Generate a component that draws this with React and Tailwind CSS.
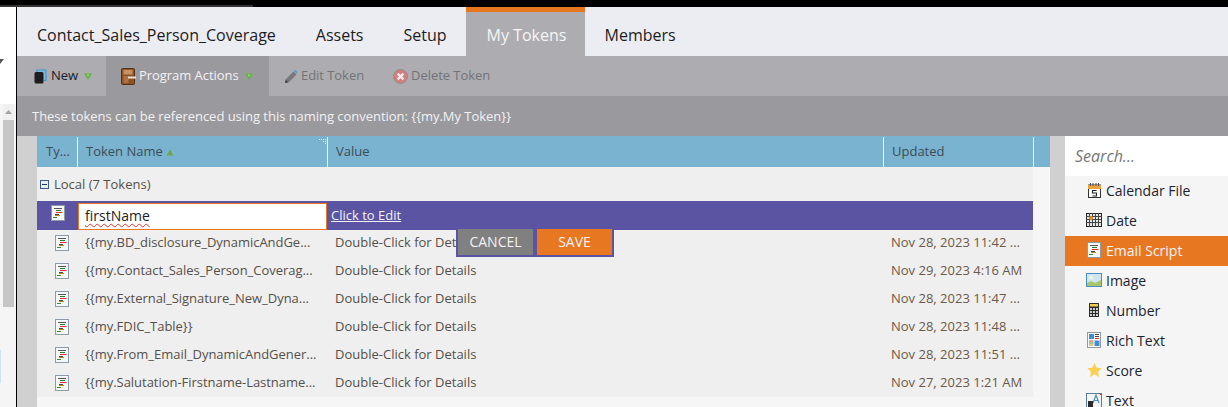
const Script = ({ cls = "" }) => (
  <svg width="14" height="16" viewBox="0 0 14 16" className={cls}>
    <rect x="0.5" y="0.5" width="13" height="15" fill="#f6f8f8" stroke="#8e9aa6" />
    <path d="M3 3.5h8" stroke="#555" />
    <path d="M5 5.5h5" stroke="#2e7d32" />
    <path d="M5 7.5h6.5" stroke="#d9342b" />
    <path d="M4 9.5h4" stroke="#444" />
    <path d="M4 10.5h5" stroke="#c28a1e" />
    <path d="M2 12.5h4" stroke="#3a8a2e" />
  </svg>
);
const Caret = () => (
  <svg width="8" height="7" viewBox="0 0 8 7" className="ml-[6px]">
    <path d="M0 0.5h8L4 7z" fill="#62b340" />
    <path d="M2.5 1.5h3L4 4z" fill="#9ad67a" />
  </svg>
);
const Book = () => (
  <svg width="13" height="15" viewBox="0 0 13 15">
    <path d="M3 3V1h9v10.5h-2" fill="#7fb8dc" stroke="#3d9ad1" strokeWidth="1.2" />
    <rect x="0.5" y="3" width="9" height="11.5" rx="1.5" fill="#1d1d1d" />
  </svg>
);
const Door = () => (
  <svg width="15" height="17" viewBox="0 0 15 17">
    <rect x="0.5" y="0.5" width="13" height="16" rx="1" fill="#8a5228" stroke="#5a3216" />
    <rect x="2.5" y="2" width="9" height="4.5" fill="#c9915f" />
    <rect x="2.5" y="8" width="5" height="7" fill="#b07040" />
    <path d="M7 9.5h8" stroke="#f1e2d0" strokeWidth="2" />
  </svg>
);
const Pencil = () => (
  <svg width="14" height="15" viewBox="0 0 14 15">
    <path d="M1 14l.8-3.8L9.5 2.5l3 3-7.7 7.7z" fill="#77777b" />
    <path d="M10 2l1.2-1.2 2.5 2.5L12.5 4.6z" fill="#4a9ccf" />
    <path d="M1 14l.8-3.2 2.4 2.4z" fill="#3c3c3e" />
  </svg>
);
const Del = () => (
  <svg width="15" height="15" viewBox="0 0 15 15">
    <circle cx="7.5" cy="7.5" r="7" fill="#d57d7d" stroke="#8f8f93" />
    <path d="M4.6 4.6l5.8 5.8M10.4 4.6l-5.8 5.8" stroke="#f5ecec" strokeWidth="2.2" />
  </svg>
);
const Cal = () => (
  <svg width="13" height="15" viewBox="0 0 13 15">
    <rect x="0.5" y="2" width="12" height="12.5" fill="#fff" stroke="#333" />
    <rect x="0" y="2" width="13" height="4" fill="#eda33c" />
    <path d="M2.5 0v3M5 0v3M8 0v3M10.5 0v3" stroke="#555" />
    <path d="M8.5 7.5h-4v2.5h4v3h-4" fill="none" stroke="#222" strokeWidth="1.1" />
  </svg>
);
const DateIcon = () => (
  <svg width="16" height="14" viewBox="0 0 16 14">
    <rect x="0.5" y="0.5" width="15" height="13" fill="#e8e8e8" stroke="#222" />
    <path d="M0 3.5h16M0 6.5h16M0 9.5h16M3.5 0v14M6.5 0v14M9.5 0v14M12.5 0v14" stroke="#444" />
    <circle cx="5" cy="5" r="2" fill="#e8952e" />
  </svg>
);
const ImageIcon = () => (
  <svg width="16" height="14" viewBox="0 0 16 14">
    <rect x="0.5" y="0.5" width="15" height="13" fill="#cfe6f2" stroke="#4a8fbd" />
    <circle cx="5" cy="4.5" r="2" fill="#f6f4d8" />
    <path d="M1 13V10l4-2 4 2 6-3v6z" fill="#a9c66c" />
  </svg>
);
const Calc = () => (
  <svg width="10" height="14" viewBox="0 0 10 14">
    <rect width="10" height="14" rx="0.5" fill="#2b2b2b" />
    <rect x="1" y="1" width="8" height="2.5" fill="#f0d04a" />
    <path d="M1 5h2v2H1zM4 5h2v2H4zM7 5h2v2H7zM1 8h2v2H1zM4 8h2v2H4zM7 8h2v2H7zM1 11h2v2H1zM4 11h2v2H4zM7 11h2v2H7z" fill="#cfcfcf" />
  </svg>
);
const Rich = () => (
  <svg width="14" height="16" viewBox="0 0 14 16">
    <rect x="0.5" y="0.5" width="13" height="15" fill="#fff" stroke="#8e9aa6" />
    <rect x="2" y="2" width="5" height="5" fill="#3f8fd2" />
    <rect x="7.5" y="8.5" width="5" height="5.5" fill="#3f8fd2" />
    <path d="M8 2.5h4M8 4.5h4" stroke="#444" />
    <path d="M8 6.5h4" stroke="#d9342b" />
    <path d="M2 9h4.5" stroke="#d9342b" />
    <path d="M2 11h4.5" stroke="#3a8a2e" />
    <path d="M2 13h4.5" stroke="#c28a1e" />
  </svg>
);
const Star = () => (
  <svg width="15" height="14" viewBox="0 0 15 14">
    <path d="M7.5 0l2.2 4.7 5.1.6-3.8 3.5 1 5.1-4.5-2.6L3 13.9l1-5.1L.2 5.3l5.1-.6z" fill="#fbd04e" />
  </svg>
);
const TextIcon = () => (
  <svg width="16" height="15" viewBox="0 0 16 15">
    <rect x="0.5" y="0.5" width="15" height="14" fill="#f4f4f4" stroke="#5b7f99" />
    <path d="M7 10l3-8 3 8M8 7.5h4" fill="none" stroke="#4a8fbd" strokeWidth="1.2" />
    <rect x="2" y="8" width="5" height="6" fill="#2b2b2b" />
    <path d="M14 1h1v1h-1z" fill="#d9342b" />
  </svg>
);

const tokens = [
  ["{{my.BD_disclosure_DynamicAndGe...", "Nov 28, 2023 11:42 ..."],
  ["{{my.Contact_Sales_Person_Coverag...", "Nov 29, 2023 4:16 AM"],
  ["{{my.External_Signature_New_Dyna...", "Nov 28, 2023 11:47 ..."],
  ["{{my.FDIC_Table}}", "Nov 28, 2023 11:48 ..."],
  ["{{my.From_Email_DynamicAndGener...", "Nov 28, 2023 11:51 ..."],
  ["{{my.Salutation-Firstname-Lastname...", "Nov 27, 2023 1:21 AM"],
];
const kinds = [
  ["Calendar File", <Cal />],
  ["Date", <DateIcon />],
  ["Email Script", <Script />],
  ["Image", <ImageIcon />],
  ["Number", <Calc />],
  ["Rich Text", <Rich />],
  ["Score", <Star />],
  ["Text", <TextIcon />],
];

export default function App() {
  return (
    <div className="h-[407px] w-[1228px] overflow-hidden flex flex-col bg-black text-[13px] font-['Open_Sans',sans-serif]">
      <div className="h-[7px] shrink-0 flex flex-col">
        <div className="h-[5px]" />
        <div className="h-[2px] w-[253px] bg-[#333333]" />
      </div>
      <div className="flex flex-1 min-h-0">
        <div className="w-[16px] shrink-0 bg-white flex flex-col relative">
          <div className="h-[52px] shrink-0">
            <svg width="4" height="6" viewBox="0 0 4 6" className="mt-[52px]">
              <path d="M0 0h4L0 5z" fill="#555" />
            </svg>
          </div>
          <div className="h-[45px] shrink-0" />
          <div className="flex-1 bg-[#f5f5f5] pl-[3px] flex flex-col">
            <div className="w-[11px] h-[16px] bg-[#f0f0f0] flex items-center justify-center">
              <svg width="7" height="4" viewBox="0 0 7 4">
                <path d="M3.5 0L7 4H0z" fill="#a3a3a3" />
              </svg>
            </div>
            <div className="w-[11px] h-[187px] bg-[#c6c6c6]" />
          </div>
          <div className="absolute left-0 top-[343px] h-[33px] w-px bg-[#cfe3f5]" />
        </div>
        <div className="w-px shrink-0 bg-black" />
        <div className="flex-1 min-w-0 flex flex-col">
          <div className="h-[49px] shrink-0 bg-[#ecedf3] flex text-[16px] text-[#1c1c1c]">
            <div className="px-5 pt-[6px] flex items-center">Contact_Sales_Person_Coverage</div>
            <div className="px-5 pt-[6px] flex items-center">Assets</div>
            <div className="px-5 pt-[6px] flex items-center">Setup</div>
            <div className="w-[119px] ml-[-1px] pl-[21px] pt-px flex items-center bg-[#adadb1] border-t-[5px] border-[#e87722] text-[#f5f5f5]">My Tokens</div>
            <div className="px-5 pt-[6px] flex items-center">Members</div>
          </div>
          <div className="h-[40px] shrink-0 bg-[#adadb1] flex items-center">
            <div className="w-[89px] pl-[17px] flex items-center text-[#16202c] h-full">
              <Book />
              <span className="ml-[4px]">New</span>
              <Caret />
            </div>
            <div className="w-[163px] pl-[15px] h-full flex items-center bg-[#9a999e] text-[#f2f2f2]">
              <Door />
              <span className="ml-[3px] tracking-[-0.05px]">Program Actions</span>
              <Caret />
            </div>
            <div className="pl-[15px] flex items-center text-[#737377]">
              <Pencil />
              <span className="ml-[3px] tracking-[-0.05px]">Edit Token</span>
            </div>
            <div className="pl-[29px] flex items-center text-[#737377]">
              <Del />
              <span className="ml-[3px] tracking-[-0.05px]">Delete Token</span>
            </div>
          </div>
          <div className="h-[40px] shrink-0 bg-[#9a999e] pl-[15px] pt-[2px] flex items-center text-[#f2f2f2] tracking-[-0.03px]">
            These tokens can be referenced using this naming convention: {"{{my.My Token}}"}
          </div>
          <div className="flex-1 min-h-0 flex bg-[#d0d0d0]">
            <div className="w-[20px] shrink-0" />
            <div className="w-[1013px] shrink-0 bg-[#f6f6f6] flex flex-col">
              <div className="h-[31px] shrink-0 bg-[#7ab3cf] flex text-[#3d4b55]">
                <div className="w-[41px] pl-[9px] flex items-center border-r border-white/90 mt-px">Ty...</div>
                <div className="w-[250px] pl-[8px] flex items-center border-r border-white/90 relative mt-px">
                  Token Name
                  <svg width="8" height="7" viewBox="0 0 8 7" className="ml-[3px]">
                    <path d="M4 .5L7.5 6.5h-7z" fill="#6aa84f" />
                  </svg>
                  <svg width="8" height="8" viewBox="0 0 8 8" className="absolute right-0 top-[1px]">
                    <path d="M0 1h1v1H0zM2 1h1v1H2zM4 1h1v1H4zM6 1h1v1H6zM4 3h1v1H4zM6 3h1v1H6zM6 5h1v1H6z" fill="#fff" />
                  </svg>
                </div>
                <div className="w-[556px] pl-[8px] flex items-center border-r border-white/90 mt-px">Value</div>
                <div className="w-[150px] pl-[8px] flex items-center border-r border-white/90 mt-px">Updated</div>
                <div className="flex-1" />
              </div>
              <div className="w-[996px] h-[230px] overflow-hidden flex flex-col bg-[#efefef] text-[#55504a]">
                <div className="h-[34px] shrink-0 flex items-center pl-[3px] pt-px">
                  <svg width="9" height="9" viewBox="0 0 9 9">
                    <rect x="0.5" y="0.5" width="8" height="8" fill="#e8eef5" stroke="#3d5a80" />
                    <path d="M2 4.5h5" stroke="#1f3a5f" />
                  </svg>
                  <span className="ml-[5px]">Local (7 Tokens)</span>
                </div>
                <div className="h-[29px] shrink-0 relative bg-[#5a54a3] flex items-center">
                  <div className="w-[41px] flex justify-center pb-[6px]"><Script /></div>
                  <div className="w-[249px] h-[27px] mt-[1px] shrink-0 bg-white border border-[#e87722] pl-[6px] pb-px flex items-center text-[14px] text-[#1c1c1c]">
                    <span className="underline decoration-wavy decoration-[#e0342b] decoration-1 underline-offset-2">firstName</span>
                  </div>
                  <span className="ml-[4px] text-[#f2f2f2] underline">Click to Edit</span>
                  <div className="absolute left-[419px] top-[28px] z-10 flex gap-[4px] bg-[#5a54a3] px-[2px] pb-[2px] text-[14px] text-[#f2f2f2]">
                    <div className="w-[75px] h-[26px] pb-px bg-[#808080] flex items-center justify-center">CANCEL</div>
                    <div className="w-[75px] h-[26px] pb-px bg-[#e87722] flex items-center justify-center">SAVE</div>
                  </div>
                </div>
                {tokens.map(([n, d]) => (
                  <div key={n} className="h-[28px] shrink-0 flex items-center pb-[2px]">
                    <div className="w-[41px] flex justify-center pl-[9px] shrink-0"><Script /></div>
                    <div className="w-[250px] pl-[7px] shrink-0 whitespace-nowrap tracking-[-0.03px]">{n}</div>
                    <div className="w-[556px] pl-[7px] shrink-0">Double-Click for Details</div>
                    <div className="pl-[7px] whitespace-nowrap text-[#6b5a48]">{d}</div>
                  </div>
                ))}
              </div>
            </div>
            <div className="w-[15px] shrink-0" />
            <div className="flex-1 bg-[#f5f5f5] flex flex-col">
              <div className="h-[40px] shrink-0 bg-white pl-[10px] flex items-center italic text-[16px] text-[#777777]">Search...</div>
              {kinds.map(([label, icon]) => (
                <div key={label} className={`h-[30px] shrink-0 flex items-center text-[14px] pb-[2px] ${label === "Email Script" ? "bg-[#e87722] text-[#f5f5f5]" : "text-[#1c2430]"}`}>
                  <div className="w-[41px] pl-[18px] pr-[1px] flex items-center justify-center shrink-0">{icon}</div>
                  <span>{label}</span>
                </div>
              ))}
            </div>
          </div>
        </div>
      </div>
    </div>
  );
}
